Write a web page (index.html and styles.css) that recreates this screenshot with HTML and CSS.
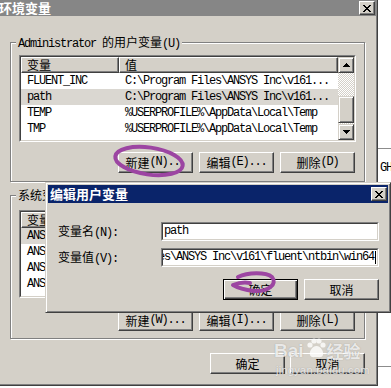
FILE: index.html
```html
<!DOCTYPE html>
<html>
<head>
<meta charset="utf-8">
<title>环境变量</title>
<link rel="stylesheet" href="styles.css">
</head>
<body>
<div class="screen">
  <div class="win">
    <div class="titlebar">
      <span class="title">环境变量</span>
      <span class="cap"><svg width="8" height="7" viewBox="0 0 8 7" shape-rendering="crispEdges"><path d="M0 0h2v1H0zM6 0h2v1H6zM1 1h2v1H1zM5 1h2v1H5zM2 2h4v1H2zM3 3h2v1H3zM2 4h4v1H2zM1 5h2v1H1zM5 5h2v1H5zM0 6h2v1H0zM6 6h2v1H6z" fill="#000"/></svg></span>
    </div>

    <div class="group g1">
      <div class="legend">Administrator <span class="cj">的用户变量</span>(U)</div>
      <div class="list l1">
        <div class="list-in">
          <div class="list-main">
            <div class="lhead">
              <div class="hc c1"><span class="cj">变量</span></div>
              <div class="hc c2"><span class="cj">值</span></div>
            </div>
            <div class="row"><div class="c1">FLUENT_INC</div><div class="c2">C:\Program Files\ANSYS Inc\v161...</div></div>
            <div class="row sel"><div class="c1">path</div><div class="c2">C:\Program Files\ANSYS Inc\v161...</div></div>
            <div class="row"><div class="c1">TEMP</div><div class="c2">%USERPROFILE%\AppData\Local\Temp</div></div>
            <div class="row"><div class="c1">TMP</div><div class="c2">%USERPROFILE%\AppData\Local\Temp</div></div>
          </div>
          <div class="vscroll">
            <div class="sbtn"><svg width="7" height="4" viewBox="0 0 7 4" shape-rendering="crispEdges"><path d="M3 0h1v1H3zM2 1h3v1H2zM1 2h5v1H1zM0 3h7v1H0z" fill="#000"/></svg></div>
            <div class="track t1"></div>
            <div class="thumb"></div>
            <div class="track t2"></div>
            <div class="sbtn"><svg width="7" height="4" viewBox="0 0 7 4" shape-rendering="crispEdges"><path d="M0 0h7v1H0zM1 1h5v1H1zM2 2h3v1H2zM3 3h1v1H3z" fill="#000"/></svg></div>
          </div>
        </div>
      </div>
      <div class="btnrow">
        <button class="btn"><span class="cj">新建</span>(N)...</button>
        <button class="btn"><span class="cj">编辑</span>(E)...</button>
        <button class="btn"><span class="cj">删除</span>(D)</button>
      </div>
    </div>

    <div class="group g2">
      <div class="legend"><span class="cj">系统变量</span>(S)</div>
      <div class="list l2">
        <div class="list-in">
          <div class="list-main">
            <div class="lhead">
              <div class="hc c1"><span class="cj">变量</span></div>
              <div class="hc c2"></div>
            </div>
            <div class="row sel"><div class="c1">ANSYS</div><div class="c2"></div></div>
            <div class="row"><div class="c1">ANSYS</div><div class="c2"></div></div>
            <div class="row"><div class="c1">ANSYS</div><div class="c2"></div></div>
            <div class="row"><div class="c1">ANSYS</div><div class="c2"></div></div>
          </div>
        </div>
      </div>
      <div class="btnrow">
        <button class="btn"><span class="cj">新建</span>(W)...</button>
        <button class="btn"><span class="cj">编辑</span>(I)...</button>
        <button class="btn"><span class="cj">删除</span>(L)</button>
      </div>
    </div>

    <div class="btnrow bottom">
      <button class="btn"><span class="cj">确定</span></button>
      <button class="btn"><span class="cj">取消</span></button>
    </div>
  </div>

  <div class="side">
    <div class="side-line first"></div>
    <div class="gh">GH</div>
    <div class="side-line last"></div>
  </div>

  <div class="dialog">
    <div class="dtitle">
      <span class="dtitle-text">编辑用户变量</span>
      <span class="cap"><svg width="8" height="7" viewBox="0 0 8 7" shape-rendering="crispEdges"><path d="M0 0h2v1H0zM6 0h2v1H6zM1 1h2v1H1zM5 1h2v1H5zM2 2h4v1H2zM3 3h2v1H3zM2 4h4v1H2zM1 5h2v1H1zM5 5h2v1H5zM0 6h2v1H0zM6 6h2v1H6z" fill="#000"/></svg></span>
    </div>
    <div class="dbody">
      <div class="field">
        <label class="flabel"><span class="cj">变量名</span>(N):</label>
        <div class="input"><div class="input-in"><span class="itext">path</span></div></div>
      </div>
      <div class="field">
        <label class="flabel"><span class="cj">变量值</span>(V):</label>
        <div class="input"><div class="input-in right"><span class="itext">C:\Program Files\ANSYS Inc\v161\fluent\ntbin\win64</span><span class="caret"></span></div></div>
      </div>
      <div class="btnrow dbtns">
        <button class="btn default"><span class="cj">确定</span></button>
        <button class="btn"><span class="cj">取消</span></button>
      </div>
    </div>
  </div>

  <svg class="marks" width="391" height="388" viewBox="0 0 391 388">
    <ellipse cx="149" cy="161" rx="34" ry="13.5" transform="rotate(8 149 161)" fill="none" stroke="#9c45a2" stroke-width="4"/>
    <path d="M238 277 C248 272 266 272 272 277 C278 284 268 292 254 291 C246 290 238 288 233 285 C238 283 245 282 250 283" fill="none" stroke="#9c45a2" stroke-width="4" stroke-linecap="round" stroke-linejoin="round"/>
  </svg>

  <div class="watermark">
    <div class="wm-top">
      <span class="wm-bai">Bai</span>
      <svg class="paw" width="22" height="22" viewBox="0 0 22 22">
        <circle cx="5" cy="8" r="2.6"/><circle cx="9" cy="4" r="2.6"/><circle cx="14" cy="4" r="2.6"/><circle cx="18" cy="8" r="2.6"/>
        <path d="M11.5 9 C7 9 4 15 5 18 C6 21 9 20 11.5 20 C14 20 17 21 18 18 C19 15 16 9 11.5 9z"/>
      </svg>
      <span class="wm-jy">经验</span>
    </div>
    <div class="wm-url">jingyan.baidu.com</div>
  </div>
</div>
</body>
</html>
```

FILE: styles.css
```css
* { box-sizing: border-box; }
html, body { margin: 0; padding: 0; }
body {
  width: 391px; height: 388px; overflow: hidden; background: #fff;
  font-family: "Liberation Mono", "Noto Sans CJK SC", monospace;
  font-size: 12px; letter-spacing: -1.2px; color: #000;
}
.cj { font-family: "Noto Sans CJK SC", sans-serif; font-size: 12px; letter-spacing: 0; }

.screen { position: relative; width: 391px; height: 388px; display: flex; align-items: flex-start; }

/* main window */
.win {
  width: 378px; height: 386px; flex: none; background: #d4d0c8;
  border-right: 1px solid #404040; border-bottom: 1px solid #404040;
  box-shadow: inset -1px -1px 0 #808080;
  display: flex; flex-direction: column;
}
.titlebar {
  height: 16px; background: #868686; display: flex; align-items: flex-start;
  justify-content: space-between; padding: 1px 2px 0 0;
}
.title {
  font-family: "Noto Sans CJK SC", sans-serif; font-weight: bold; font-size: 13px;
  letter-spacing: 0; color: #fff; line-height: 15px; margin-left: -1px; margin-top: -1px;
}
.cap {
  width: 16px; height: 14px; background: #d4d0c8; display: flex; align-items: center; justify-content: center;
  border: 1px solid; border-color: #fff #404040 #404040 #fff; box-shadow: inset -1px -1px 0 #808080;
}

/* group boxes */
.group {
  position: relative; margin-left: 10px; width: 355px;
  border: 1px solid #808080; box-shadow: inset 1px 1px 0 #fff, 1px 1px 0 #fff;
  padding: 0 0 0 8px;
}
.g1 { margin-top: 26px; height: 140px; padding-top: 12px; }
.g2 { margin-top: 13px; height: 144px; padding-top: 14px; }
.legend {
  position: absolute; top: -8px; left: 5px; height: 14px; line-height: 14px;
  padding: 0 2px; background: #d4d0c8; white-space: nowrap;
}

/* list views */
.list { width: 337px; border: 1px solid; border-color: #808080 #fff #fff #808080; }
.l1 { height: 87px; }
.l2 { height: 88px; }
.list-in {
  height: 100%; border: 1px solid; border-color: #404040 #d4d0c8 #d4d0c8 #404040;
  background: #fff; display: flex; overflow: hidden;
}
.list-main { flex: 1; min-width: 0; overflow: hidden; }
.lhead { display: flex; height: 16px; background: #d4d0c8; }
.hc {
  height: 16px; line-height: 14px; padding-left: 5px;
  border: 1px solid; border-color: #fff #404040 #404040 #fff; box-shadow: inset -1px -1px 0 #808080;
}
.lhead .c1 { width: 98px; flex: none; }
.lhead .c2 { flex: 1; }
.row { display: flex; height: 16px; line-height: 16px; white-space: nowrap; }
.row .c1 { width: 98px; flex: none; padding-left: 6px; overflow: hidden; }
.row .c2 { flex: 1; padding-left: 6px; overflow: hidden; }
.row.sel { background: #dad7d1; }

.vscroll { width: 16px; flex: none; display: flex; flex-direction: column; }
.sbtn, .thumb {
  background: #d4d0c8; display: flex; align-items: center; justify-content: center;
  border: 1px solid; border-color: #d4d0c8 #404040 #404040 #d4d0c8;
  box-shadow: inset 1px 1px 0 #fff, inset -1px -1px 0 #808080;
}
.sbtn { height: 16px; }
.track { background: repeating-conic-gradient(#fff 0 25%, #d4d0c8 0 50%) 0 0 / 2px 2px; }
.t1 { height: 23px; }
.thumb { height: 27px; }
.t2 { height: 1px; }

/* buttons */
.btnrow { display: flex; justify-content: flex-end; gap: 6px; }
.g1 .btnrow, .g2 .btnrow { width: 337px; padding-right: 1px; }
.g1 .btnrow { margin-top: 10px; }
.g2 .btnrow { margin-top: 12px; }
.btn {
  width: 75px; height: 21px; padding: 0; margin: 0; background: #d4d0c8; color: #000;
  font: inherit; letter-spacing: inherit; line-height: 19px;
  border: 1px solid; border-color: #fff #404040 #404040 #fff; box-shadow: inset -1px -1px 0 #808080;
  display: flex; align-items: center; justify-content: center; white-space: nowrap;
}
.btnrow.bottom { width: 355px; margin-left: 10px; margin-top: 14px; gap: 5px; }

/* right strip (other window behind) */
.side { flex: 1; height: 388px; display: flex; flex-direction: column; }
.side-line { height: 1px; background: #8c8c8c; }
.side-line.first { margin-top: 148px; }
.gh { margin-top: 12px; padding-left: 2px; line-height: 14px; }
.side-line.last { margin-top: auto; margin-bottom: 21px; }

/* dialog */
.dialog {
  position: absolute; left: 45px; top: 182px; width: 346px; height: 131px;
  background: #d4d0c8; padding: 2px;
  border: 1px solid; border-color: #d4d0c8 #404040 #404040 #d4d0c8;
  box-shadow: inset 1px 1px 0 #fff, inset -1px -1px 0 #808080;
  display: flex; flex-direction: column;
}
.dtitle {
  height: 18px; background: #0a246a; display: flex; align-items: center;
  justify-content: space-between; padding: 0 1px 0 2px;
}
.dtitle-text {
  font-family: "Noto Sans CJK SC", sans-serif; font-weight: bold; font-size: 13px;
  letter-spacing: 0; color: #fff; line-height: 16px;
}
.dbody { padding: 19px 9px 0 10px; display: flex; flex-direction: column; gap: 7px; }
.field { display: flex; align-items: center; height: 19px; }
.flabel { width: 103px; flex: none; line-height: 19px; white-space: nowrap; }
.input { width: 218px; height: 19px; border: 1px solid; border-color: #808080 #fff #fff #808080; }
.input-in {
  height: 100%; background: #fff; border: 1px solid; border-color: #404040 #d4d0c8 #d4d0c8 #404040;
  display: flex; align-items: center; padding-left: 1px; overflow: hidden; white-space: nowrap;
}
.input-in.right { justify-content: flex-end; padding-right: 1px; padding-left: 0; }
.itext { flex: none; line-height: 15px; }
.caret { width: 1px; height: 13px; background: #000; flex: none; margin-left: 1px; }
.dbtns { margin-top: 5px; }
.btn.default {
  border: 1px solid #000;
  box-shadow: inset 1px 1px 0 #fff, inset -1px -1px 0 #404040, inset -2px -2px 0 #808080;
}

/* annotation marks & watermark */
.marks { position: absolute; left: 0; top: 0; pointer-events: none; }
.watermark {
  position: absolute; left: 274px; top: 337px; color: rgba(255,255,255,0.78);
  font-family: "Liberation Sans", Arial, sans-serif; letter-spacing: 0;
  text-shadow: 0 0 1px rgba(90,90,90,0.5); pointer-events: none;
}
.wm-top { display: flex; align-items: flex-end; height: 24px; }
.wm-bai { font-size: 19px; font-weight: bold; line-height: 20px; }
.paw { fill: rgba(255,255,255,0.78); margin: 0 0 2px 1px; }
.wm-jy { font-family: "Noto Sans CJK SC", sans-serif; font-size: 17px; font-weight: bold; line-height: 20px; }
.wm-url { font-size: 11px; line-height: 12px; margin-top: 3px; padding-left: 2px; letter-spacing: 0.3px; }
```
